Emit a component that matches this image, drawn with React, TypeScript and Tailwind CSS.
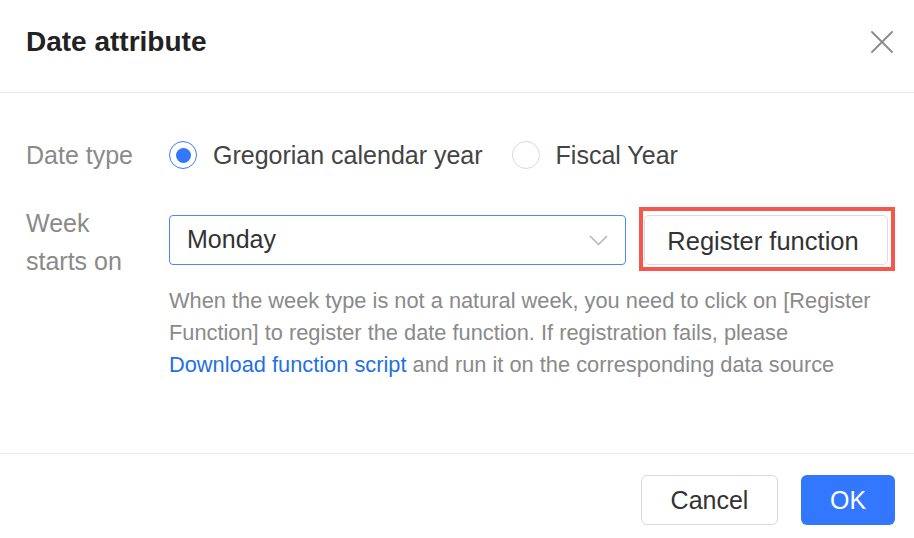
import { useState } from 'react'

const FONT = { fontFamily: '"Liberation Sans", Arial, Helvetica, sans-serif' }

function Radio({ checked, label, onClick }: { checked: boolean; label: string; onClick: () => void }) {
  return (
    <button type="button" onClick={onClick} className="flex items-center gap-[16px] text-left">
      <span
        className={
          checked
            ? 'flex h-[28px] w-[28px] items-center justify-center rounded-full border border-[#3b7cf6] bg-white'
            : 'flex h-[28px] w-[28px] items-center justify-center rounded-full border border-[#d9d9d9] bg-white'
        }
      >
        {checked && <span className="h-[15px] w-[15px] rounded-full bg-[#3377ff]" />}
      </span>
      <span className="text-[25px] leading-[40px] text-[#444]">{label}</span>
    </button>
  )
}

export default function App() {
  const [dateType, setDateType] = useState<'gregorian' | 'fiscal'>('gregorian')

  return (
    <div className="h-[538px] w-[914px] overflow-hidden bg-white" style={FONT}>
      {/* header */}
      <div className="flex h-[93px] items-center justify-between border-b border-[#e8e8e8] pb-[9px] pl-[26px] pr-[20px]">
        <h1 className="text-[28px] font-bold leading-[32px] text-[#222]">Date attribute</h1>
        <button type="button" className="flex h-[24px] w-[24px] items-center justify-center" aria-label="Close">
          <svg width="22" height="22" viewBox="0 0 22 22" fill="none" stroke="#8a8a8a" strokeWidth="1.8" strokeLinecap="round">
            <path d="M1 1 L21 21 M21 1 L1 21" />
          </svg>
        </button>
      </div>

      {/* body */}
      <div className="h-[360px] pl-[26px] pt-[42px]">
        <div className="flex items-center">
          <div className="w-[143px] text-[25px] leading-[40px] text-[#8a8a8a]">Date type</div>
          <div className="flex items-center gap-[29px]">
            <Radio checked={dateType === 'gregorian'} label="Gregorian calendar year" onClick={() => setDateType('gregorian')} />
            <Radio checked={dateType === 'fiscal'} label="Fiscal Year" onClick={() => setDateType('fiscal')} />
          </div>
        </div>

        <div className="mt-[30px] flex items-start">
          <div className="w-[143px] text-[25px] leading-[37.5px] text-[#8a8a8a]">
            Week
            <br />
            starts on
          </div>
          <div className="flex flex-col">
            <div className="flex items-start">
              <div className="mt-[10px] flex h-[50px] w-[457px] items-center justify-between rounded-[4px] border border-[#4a8af4] pl-[17px] pr-[17px]">
                <span className="text-[25px] text-[#333]">Monday</span>
                <svg width="19" height="11" viewBox="0 0 19 11" fill="none" stroke="#b5b5b5" strokeWidth="1.5">
                  <path d="M1 1 L9.5 9.5 L18 1" />
                </svg>
              </div>
              <div className="ml-[13px] mt-[2px] border-4 border-[#f5574a] pb-[2px] pl-[1px] pr-[3px] pt-[4px]">
                <button
                  type="button"
                  className="flex h-[50px] w-[244px] items-center justify-center rounded-[5px] border border-[#dcdcdc] bg-white pr-[6px] pt-[3px] text-[25.5px] text-[#333]"
                >
                  Register function
                </button>
              </div>
            </div>
            <p className="mt-[14px] text-[21.8px] leading-[32px] text-[#8a8a8a]">
              When the week type is not a natural week, you need to click on [Register
              <br />
              Function] to register the date function. If registration fails, please
              <br />
              <a href="#" className="text-[#1f6fe8]">
                Download function script
              </a>{' '}
              and run it on the corresponding data source
            </p>
          </div>
        </div>
      </div>

      {/* footer */}
      <div className="flex justify-end gap-[23px] border-t border-[#ececec] pr-[19px] pt-[21px]">
        <button
          type="button"
          className="h-[50px] w-[137px] rounded-[6px] border border-[#d9d9d9] bg-white pt-[2px] text-[25px] text-[#333]"
        >
          Cancel
        </button>
        <button type="button" className="h-[50px] w-[94px] rounded-[6px] bg-[#3377ff] pt-[2px] text-[25px] text-white">
          OK
        </button>
      </div>
    </div>
  )
}
